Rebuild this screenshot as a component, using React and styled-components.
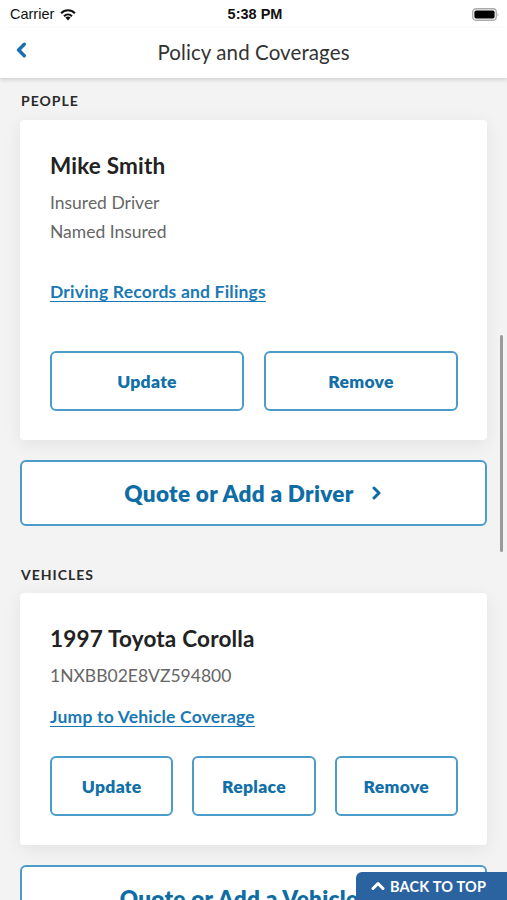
import React from 'react';
import styled, { createGlobalStyle } from 'styled-components';

const GlobalStyle = createGlobalStyle`
  html, body {
    margin: 0;
    padding: 0;
    background: #f3f3f3;
  }
  * { box-sizing: border-box; }
`;

const Screen = styled.div`
  position: relative;
  width: 507px;
  height: 900px;
  overflow: hidden;
  background: #f3f3f3;
  font-family: Lato, "Open Sans", sans-serif;
  color: #222;
`;

const StatusBar = styled.div`
  height: 28px;
  background: #fff;
  display: grid;
  grid-template-columns: 1fr auto 1fr;
  align-items: center;
  padding: 0 7px 0 10px;
  font-family: "Liberation Sans", Arial, sans-serif;
  font-size: 14.5px;
  color: #111;
`;

const Carrier = styled.div`
  display: flex;
  align-items: center;
  gap: 5px;
`;

const Clock = styled.div`
  font-weight: 700;
  font-size: 14.5px;
`;

const BatteryWrap = styled.div`
  justify-self: end;
  display: flex;
  align-items: center;
`;

const NavBar = styled.div`
  position: relative;
  z-index: 2;
  height: 50px;
  background: #fff;
  display: flex;
  align-items: center;
  justify-content: center;
  padding-bottom: 2px;
  box-shadow: 0 2px 4px rgba(0, 0, 0, 0.14);
`;

const BackButton = styled.div`
  position: absolute;
  left: 14px;
  top: 14px;
  display: flex;
`;

const NavTitle = styled.div`
  font-size: 20.5px;
  color: #333;
  letter-spacing: 0.1px;
`;

const Content = styled.div`
  padding: 0 20px;
`;

const SectionLabel = styled.div`
  font-size: 14px;
  font-weight: 700;
  letter-spacing: 1px;
  color: #2a2a2a;
  margin: ${p => p.$top}px 1px ${p => p.$bottom}px;
  line-height: 16px;
`;

const Card = styled.div`
  background: #fff;
  border-radius: 4px;
  box-shadow: 0 4px 18px rgba(0, 0, 0, 0.07);
  padding: ${p => p.$pad};
`;

const CardTitle = styled.div`
  font-size: 22.5px;
  font-weight: 700;
  line-height: 26px;
  color: #222;
  letter-spacing: 0.2px;
`;

const Detail = styled.div`
  font-size: 17.5px;
  line-height: 29px;
  color: #666;
`;

const Details = styled.div`
  margin-top: ${p => p.$top}px;
`;

const TextLink = styled.a`
  display: inline-block;
  font-size: 17.5px;
  font-weight: 700;
  line-height: 20px;
  color: #1a78b4;
  text-decoration: underline;
  text-underline-offset: 3px;
  text-decoration-thickness: 1px;
  letter-spacing: 0.2px;
  margin-top: ${p => p.$top}px;
`;

const ButtonRow = styled.div`
  display: grid;
  grid-template-columns: repeat(${p => p.$cols}, 1fr);
  gap: ${p => p.$gap}px;
  margin-top: ${p => p.$top}px;
`;

const OutlineButton = styled.button`
  height: 60px;
  background: #fff;
  border: 2px solid #4b9bcb;
  border-radius: 6px;
  font-family: Lato, "Open Sans", sans-serif;
  font-size: 17.5px;
  font-weight: 800;
  color: #126fa7;
  letter-spacing: 0.3px;
`;

const WideButton = styled.button`
  width: 100%;
  height: 66px;
  margin-top: 20px;
  background: #fff;
  border: 2px solid #4b9bcb;
  border-radius: 6px;
  display: flex;
  align-items: center;
  justify-content: center;
  gap: 15px;
  font-family: Lato, "Open Sans", sans-serif;
  font-size: 22.5px;
  font-weight: 800;
  color: #0f6da6;
  letter-spacing: 0.3px;
`;

const ScrollBar = styled.div`
  position: absolute;
  right: 4px;
  top: 335px;
  width: 3px;
  height: 217px;
  border-radius: 2px;
  background: #9a9a9a;
`;

const BackToTop = styled.div`
  position: absolute;
  right: 0;
  bottom: 0;
  width: 151px;
  height: 28px;
  background: #2b62a0;
  border-top-left-radius: 6px;
  display: flex;
  align-items: center;
  justify-content: center;
  gap: 5px;
  color: #fff;
  font-size: 14.5px;
  font-weight: 700;
  letter-spacing: 0.2px;
  padding-right: 6px;
`;

const Chevron = ({ dir = 'right', size = 14, color = '#0f6da6', stroke = 3 }) => {
  const paths = {
    right: 'M5 2 L10 7 L5 12',
    left: 'M9 2 L4 7 L9 12',
    up: 'M2 9.5 L7 4.5 L12 9.5',
  };
  return (
    <svg width={size} height={size} viewBox="0 0 14 14" fill="none">
      <path d={paths[dir]} stroke={color} strokeWidth={stroke} strokeLinecap="round" strokeLinejoin="round" />
    </svg>
  );
};

const Wifi = () => (
  <svg width="18" height="13" viewBox="0 0 18 13">
    <path d="M9 12.5 L6.4 9.6 A3.8 3.8 0 0 1 11.6 9.6 Z" fill="#111" />
    <path d="M4.3 7.4 A6.8 6.8 0 0 1 13.7 7.4 L12.3 8.9 A4.8 4.8 0 0 0 5.7 8.9 Z" fill="#111" />
    <path d="M1.4 4.4 A10.8 10.8 0 0 1 16.6 4.4 L15.2 5.9 A8.8 8.8 0 0 0 2.8 5.9 Z" fill="#111" />
  </svg>
);

const Battery = () => (
  <svg width="28" height="13" viewBox="0 0 28 13">
    <rect x="0.75" y="0.75" width="23.5" height="11.5" rx="3.2" fill="none" stroke="#aaa" strokeWidth="1.3" />
    <rect x="2.4" y="2.4" width="20.2" height="8.2" rx="1.8" fill="#000" />
    <path d="M25.6 4.4 Q27.3 6.5 25.6 8.6 Z" fill="#aaa" />
  </svg>
);

export default function App() {
  return (
    <Screen>
      <GlobalStyle />
      <StatusBar>
        <Carrier>
          Carrier <Wifi />
        </Carrier>
        <Clock>5:38 PM</Clock>
        <BatteryWrap>
          <Battery />
        </BatteryWrap>
      </StatusBar>
      <NavBar>
        <BackButton>
          <Chevron dir="left" size={16} color="#1a6fb0" stroke={3} />
        </BackButton>
        <NavTitle>Policy and Coverages</NavTitle>
      </NavBar>

      <Content>
        <SectionLabel $top={15} $bottom={11}>PEOPLE</SectionLabel>
        <Card $pad="33px 29px 29px 30px">
          <CardTitle>Mike Smith</CardTitle>
          <Details $top={9}>
            <Detail>Insured Driver</Detail>
            <Detail>Named Insured</Detail>
          </Details>
          <TextLink $top={36}>Driving Records and Filings</TextLink>
          <ButtonRow $cols={2} $gap={20} $top={49}>
            <OutlineButton>Update</OutlineButton>
            <OutlineButton>Remove</OutlineButton>
          </ButtonRow>
        </Card>
        <WideButton>
          Quote or Add a Driver
          <Chevron dir="right" size={14} />
        </WideButton>

        <SectionLabel $top={41} $bottom={10}>VEHICLES</SectionLabel>
        <Card $pad="33px 29px 29px 30px">
          <CardTitle>1997 Toyota Corolla</CardTitle>
          <Details $top={9}>
            <Detail>1NXBB02E8VZ594800</Detail>
          </Details>
          <TextLink $top={17}>Jump to Vehicle Coverage</TextLink>
          <ButtonRow $cols={3} $gap={19} $top={29}>
            <OutlineButton>Update</OutlineButton>
            <OutlineButton>Replace</OutlineButton>
            <OutlineButton>Remove</OutlineButton>
          </ButtonRow>
        </Card>
        <WideButton>
          Quote or Add a Vehicle
          <Chevron dir="right" size={14} />
        </WideButton>
      </Content>

      <ScrollBar />
      <BackToTop>
        <Chevron dir="up" size={14} color="#fff" stroke={3} />
        BACK TO TOP
      </BackToTop>
    </Screen>
  );
}
